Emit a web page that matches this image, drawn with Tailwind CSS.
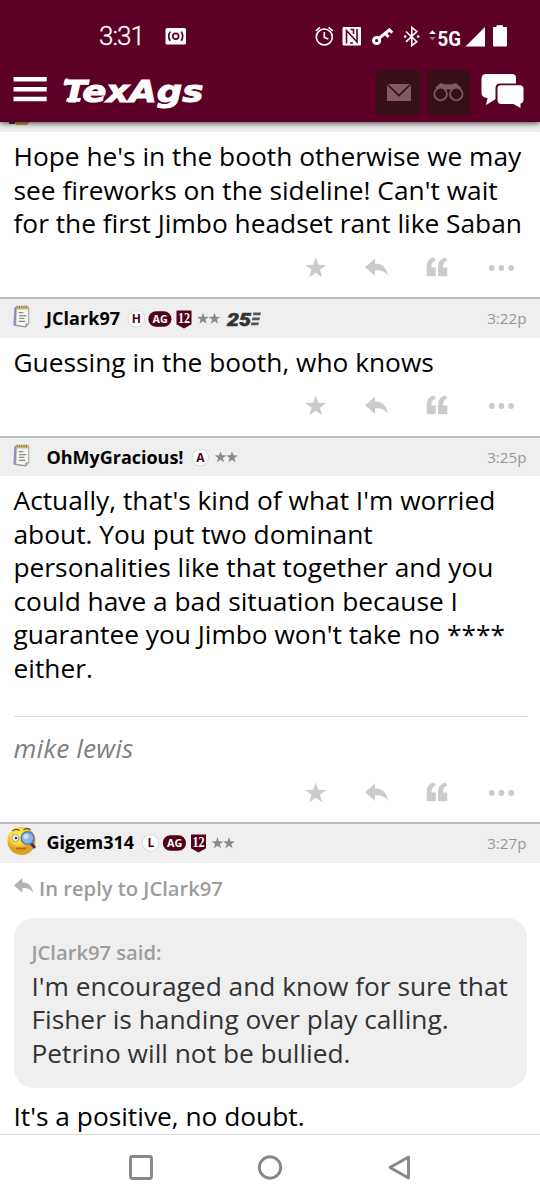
<!DOCTYPE html>
<html lang="en">
<head>
<meta charset="utf-8">
<title>TexAgs</title>
<script src="https://cdn.jsdelivr.net/npm/@tailwindcss/browser@4"></script>
</head>
<body class="w-[540px] h-[1200px] overflow-hidden bg-white font-['Open_Sans',sans-serif] text-black">
<svg class="hidden">
  <defs>
    <symbol id="star" viewBox="0 0 24 24"><path d="M12 .5l2.900 8.200 8.800.2-7 5.300 2.500 8.500L12 17.700l-7.200 5 2.500-8.500-7-5.300 8.800-.2z"/></symbol>
    <symbol id="reply" viewBox="0 0 24 20"><path d="M10.500 0v5.200C18 5.200 23 9.500 24 18.500c-3-4.500-7-6.200-13.500-6v6L0 9.300z"/></symbol>
    <symbol id="quote" viewBox="0 0 22 20"><path d="M0 19.500V11C0 4.500 3 1 7.500 0l2 3.500C6.500 4.500 5 6.500 5 10.500h4.500v9zM11.800 19.500V11c0-6.500 3-10 7.500-11l2 3.500c-3 1-4.500 3-4.500 7h4.500v9z"/></symbol>
    <symbol id="dots" viewBox="0 0 26 8"><circle cx="3.200" cy="4" r="2.900"/><circle cx="12.900" cy="4" r="2.900"/><circle cx="22.600" cy="4" r="2.900"/></symbol>
    <symbol id="note" viewBox="0 0 20 24">
      <path d="M2 2.500l2-1h13v18l-3 4-11-1.500-2-1z" fill="#8d91c4"/>
      <path d="M4 3.500l13-.5v16.500l-3.500 3L3.500 21z" fill="#f7f7f0" stroke="#8c8f98" stroke-width=".8"/>
      <path d="M13.500 22.500l.4-3.500 3.100.5z" fill="#9b9b91"/>
      <path d="M4 1.200h13v3.500H4z" fill="#d9b77c"/>
      <path d="M5 .5v3m2.400-3v3M9.800.5v3m2.400-3v3m2.400-3v3" stroke="#766044" stroke-width=".8"/>
      <path d="M6.500 8h5m-4.500 3h7.500m-7.500 3h5.500m-6 3h7" stroke="#81908d" stroke-width="1.300"/>
    </symbol>
    <symbol id="ag" viewBox="0 0 24 16"><rect x=".3" y=".3" width="23.200" height="15.400" rx="7.700" fill="#500018"/><text x="4.500" y="12" font-family="Open Sans" font-weight="700" font-size="11" fill="#fff" textLength="15.200" lengthAdjust="spacingAndGlyphs">AG</text></symbol>
    <symbol id="twelve" viewBox="0 0 16 19"><path d="M.5.500h15v13.800L8 18.500.5 14.300z" fill="#500018"/><text x="1.900" y="12.800" font-family="Liberation Serif" font-weight="700" font-size="14.500" fill="#fff" textLength="12.200" lengthAdjust="spacingAndGlyphs">12</text></symbol>
    <symbol id="actions" viewBox="0 0 210 24">
      <use href="#star" x="1" y="1" width="21.500" height="21.500"/>
      <use href="#reply" x="61" y="2.500" width="23" height="19"/>
      <use href="#quote" x="122.500" y="1.200" width="21.500" height="19.500"/>
      <use href="#dots" x="184.500" y="8" width="26" height="8"/>
    </symbol>
  </defs>
</svg>

<header class="relative z-10 flex h-[122px] flex-col bg-[#5c0025] text-white shadow-[0_1px_6px_rgba(0,0,0,0.75)]">
  <svg class="h-[66px] w-[540px]" viewBox="0 0 540 66" fill="#fff">
    <text x="99" y="45" font-family="Roboto" font-weight="300" font-size="26" textLength="46" stroke="#fff" stroke-width=".3">3:31</text>
    <rect x="165.500" y="28" width="20.500" height="16.500" rx="1.500"/>
    <g fill="none" stroke="#5c0025" stroke-width="1.700"><circle cx="175.700" cy="36.200" r="2.900"/><path d="M170.200 31.600q-3 4.600 0 9.200M181.200 31.600q3 4.600 0 9.200"/></g>
    <g fill="none" stroke="#fff" stroke-width="1.600"><circle cx="324.300" cy="37" r="8"/><path d="M324.300 32v5.500l4 1.500M315.800 30.800l4.200-3.500M328.600 27.300l4.200 3.500"/></g>
    <rect x="342.500" y="27" width="18.500" height="18.500" rx="1"/>
    <path d="M346.500 43.500V30.500L357 42V29M350.500 29.500h3v4.500M350 43h3" fill="none" stroke="#5c0025" stroke-width="1.600"/>
    <g fill="none" stroke="#fff" stroke-width="3"><circle cx="376.600" cy="40.500" r="3.100"/><path d="M379.300 38L390.500 29M385 33l3.500 4M389 29.500l3.200 3.200"/></g>
    <path d="M406 31.500l10.800 10.200-5 4V27.500l5 4L406 41.800" fill="none" stroke="#fff" stroke-width="1.600"/>
    <circle cx="405.200" cy="36.500" r="1.300"/><circle cx="418.200" cy="36.500" r="1.300"/>
    <path d="M429 34l3.500-3.800L436 34z"/><path d="M429.500 37l3 3.500 3-3.500z" opacity=".45"/>
    <text x="437.500" y="46" font-family="Roboto" font-weight="700" font-size="21" textLength="23.500" lengthAdjust="spacingAndGlyphs">5G</text>
    <path d="M485 27v19.500h-19.500z"/>
    <path d="M496.500 25.300h6.500V27h3.500q.5 0 .5 1v17.500q0 1-1 1h-12q-1 0-1-1V28q0-1 1-1h2.500z"/>
  </svg>
  <svg class="h-[56px] w-[540px]" viewBox="0 66 540 56" fill="#fff">
    <path d="M13.500 77h33.200v4.500H13.500zM13.500 87h33.200v4.500H13.500zM13.500 96.700h33.200v4.500H13.500z"/>
    <text x="62.500" y="101.500" font-family="DejaVu Sans" font-style="italic" font-weight="700" font-size="31" textLength="141" lengthAdjust="spacingAndGlyphs" stroke="#fff" stroke-width="1">TexAgs</text>
    <path d="M65.500 78.500h3l-2 7h-2.500zM67 98h14l-1 3.800H66z"/>
    <rect x="376.500" y="70" width="44" height="45" rx="3" fill="#380f17"/>
    <rect x="426.500" y="70" width="44" height="45" rx="3" fill="#380f17"/>
    <rect x="387" y="84" width="24" height="17" fill="#7f5b64"/>
    <path d="M387 84l12 11.500L411 84" fill="none" stroke="#380f17" stroke-width="1.700"/>
    <path d="M435 88l5-4.500q2.500-1 4 .8h8.500q1.500-1.800 4-.8l5 4.500-5.500 3-6.500-1.500h-2.200L441 91z" fill="#7f5b64"/>
    <g fill="#380f17" stroke="#7f5b64" stroke-width="1.700"><circle cx="440.600" cy="94" r="6.300"/><circle cx="456.300" cy="94" r="6.300"/></g>
    <path d="M486 74h26q4 0 4 4v19q0 2-2 2h-18l-10 6 1.500-7q-6-.5-6-5V79q0-5 4.500-5z"/>
    <path d="M500 84.500h20q4 0 4 4V99q0 4.500-3.500 4.500V108l-8-4H500q-3.500 0-3.500-4V88.500q0-4 3.500-4z" stroke="#5c0025" stroke-width="2"/>
    <path d="M501 85.500h19q3.500 0 3.500 3.500v10.500q0 3.500-3 4V108l-7-4h-12.500q-3 0-3-3.500V89q0-3.500 3-3.500z"/>
  </svg>
</header>

<main class="flex h-[1012px] flex-col overflow-hidden">
  <article class="flex h-[175px] flex-col">
    <div class="flex h-[10px] shrink-0 bg-[#efefef] pl-[9px]"><div class="h-[2px] w-[6px] bg-[#3b3340]"></div><div class="h-[3px] w-[14px] rounded-b-full bg-[#c39b45]"></div></div>
    <p class="mt-[8px] pl-[13.500px] text-[26.300px] leading-[33.600px] whitespace-nowrap">Hope he's in the booth otherwise we may<br>see fireworks on the sideline! Can't wait<br>for the first Jimbo headset rant like Saban</p>
    <svg class="mt-[15px] ml-[304px] h-6 w-[210px] shrink-0" fill="#cbcbcb"><use href="#actions"/></svg>
  </article>

  <article class="flex h-[139px] flex-col">
    <div class="flex h-[41px] shrink-0 items-center border-t-2 border-[#bdbdbd] bg-[#efefef]">
      <svg class="mb-1 ml-3 h-[23px] w-5"><use href="#note"/></svg>
      <svg class="h-[39px] w-[440px]" viewBox="32 299 440 39">
        <text x="46" y="325" font-family="Open Sans" font-weight="700" font-size="18" textLength="74">JClark97</text>
        <circle cx="136.300" cy="318.800" r="8.300" fill="#fff" stroke="#ccc" stroke-width=".7"/><text x="136.300" y="323" text-anchor="middle" font-family="Open Sans" font-weight="700" font-size="12" fill="#500018">H</text>
        <use href="#ag" x="148" y="311" width="24" height="16"/>
        <use href="#twelve" x="176" y="310" width="16" height="19"/>
        <g fill="#8b8b8b"><use href="#star" x="197" y="312.500" width="12" height="12"/><use href="#star" x="208.500" y="312.500" width="12" height="12"/></g>
        <text x="227" y="325.500" font-family="Roboto" font-weight="900" font-style="italic" font-size="18" fill="#333" stroke="#333" stroke-width=".5" textLength="24" lengthAdjust="spacingAndGlyphs">25</text>
        <path d="M253.500 312.500h7.500l-.7 2.800h-7.500zM252.500 317.500h7.500l-.7 2.800h-7.500zM251.500 322.500h7.500l-.7 2.800h-7.500z" fill="#555"/>
      </svg>
      <span class="ml-auto pr-[13.500px] text-[15.200px] text-[#999]">3:22p</span>
    </div>
    <p class="mt-2 pl-[13.500px] text-[26.300px] leading-[33.600px] whitespace-nowrap">Guessing in the booth, who knows</p>
    <svg class="mt-[14px] ml-[304px] h-6 w-[210px] shrink-0" fill="#cbcbcb"><use href="#actions"/></svg>
  </article>

  <article class="flex h-[386px] flex-col">
    <div class="flex h-[40px] shrink-0 items-center border-t-2 border-[#bdbdbd] bg-[#efefef]">
      <svg class="mb-1 ml-3 h-[23px] w-5"><use href="#note"/></svg>
      <svg class="h-[39px] w-[440px]" viewBox="32 438 440 39">
        <text x="46.500" y="463.500" font-family="Open Sans" font-weight="700" font-size="18" textLength="137">OhMyGracious!</text>
        <circle cx="200.300" cy="457.500" r="8.300" fill="#fff" stroke="#ccc" stroke-width=".7"/><text x="200.300" y="461.700" text-anchor="middle" font-family="Open Sans" font-weight="700" font-size="12" fill="#500018">A</text>
        <g fill="#8b8b8b"><use href="#star" x="214.500" y="451" width="12" height="12"/><use href="#star" x="226" y="451" width="12" height="12"/></g>
      </svg>
      <span class="ml-auto pr-[13.500px] text-[15.200px] text-[#999]">3:25p</span>
    </div>
    <p class="mt-2 pl-[13.500px] text-[26.300px] leading-[33.600px] whitespace-nowrap">Actually, that's kind of what I'm worried<br>about. You put two dominant<br>personalities like that together and you<br>could have a bad situation because I<br>guarantee you Jimbo won't take no ****<br>either.</p>
    <div class="mx-[13.500px] mt-[30px] border-t border-[#dcdcdc] pt-[15px] text-[26.300px] leading-[33.600px] tracking-[0.1px] text-[#808080] italic">mike lewis</div>
    <svg class="mt-[16px] ml-[304px] h-6 w-[210px] shrink-0" fill="#cbcbcb"><use href="#actions"/></svg>
  </article>

  <article class="flex flex-col">
    <div class="flex h-[41px] shrink-0 items-center border-t-2 border-[#bdbdbd] bg-[#efefef]">
      <svg class="h-[39px] w-[472px]" viewBox="0 824 472 39">
        <defs><radialGradient id="face" cx=".4" cy=".3"><stop offset="0" stop-color="#ffef61"/><stop offset=".65" stop-color="#f6d637"/><stop offset="1" stop-color="#dca029"/></radialGradient></defs>
        <circle cx="21.500" cy="841" r="14" fill="url(#face)"/>
        <path d="M12.500 831q3-3 7-.5M23.500 830q4-3 7 0" fill="none" stroke="#67501e" stroke-width="1.300"/>
        <circle cx="15.500" cy="838" r="3.500" fill="#fff" stroke="#8e8158" stroke-width=".8"/><circle cx="16" cy="838" r="1.300" fill="#333"/>
        <path d="M30 842l5 6" stroke="#343b4a" stroke-width="2.800"/>
        <circle cx="27.500" cy="838" r="6.300" fill="#8cb7ed" stroke="#5879ba" stroke-width="1.500"/><circle cx="26" cy="836.500" r="2.500" fill="#cce6ff"/>
        <path d="M16 848.500h10" stroke="#b86427" stroke-width="1.800"/>
        <text x="46.500" y="849" font-family="Open Sans" font-weight="700" font-size="18" textLength="87.500">Gigem314</text>
        <circle cx="150.500" cy="843" r="8.300" fill="#fff" stroke="#ccc" stroke-width=".7"/><text x="150.800" y="847.200" text-anchor="middle" font-family="Open Sans" font-weight="700" font-size="12" fill="#500018">L</text>
        <use href="#ag" x="162.500" y="835" width="24" height="16"/>
        <use href="#twelve" x="190.500" y="834" width="16" height="19"/>
        <g fill="#8b8b8b"><use href="#star" x="211.500" y="837" width="12" height="12"/><use href="#star" x="223" y="837" width="12" height="12"/></g>
      </svg>
      <span class="ml-auto pr-[13.500px] text-[15.200px] text-[#999]">3:27p</span>
    </div>
    <div class="mt-[9px] flex h-[32px] items-center gap-[6px] pl-[14px] text-[20.200px] font-semibold whitespace-nowrap text-[#9c9c9c]">
      <svg class="mb-1 h-4 w-[19px]" fill="#b3b3b3"><use href="#reply"/></svg>
      <span>In reply to JClark97</span>
    </div>
    <section class="mx-[13.500px] mt-[14px] h-[170px] rounded-[20px] bg-[#efefef] pt-[18px] pl-[18px] whitespace-nowrap">
      <div class="text-[20.200px] leading-[33.600px] font-semibold text-[#9c9c9c]">JClark97 said:</div>
      <p class="text-[26.300px] leading-[33.600px] text-[#333]">I'm encouraged and know for sure that<br>Fisher is handing over play calling.<br>Petrino will not be bullied.</p>
    </section>
    <p class="mt-3 pl-[13.500px] text-[26.300px] leading-[33.600px] whitespace-nowrap">It's a positive, no doubt.</p>
  </article>
</main>

<nav class="h-[66px] border-t border-[#d8d8d8] bg-white">
  <svg class="h-[65px] w-[540px]" viewBox="0 1135 540 65" fill="none" stroke="#888" stroke-width="2.900" stroke-linejoin="round">
    <rect x="130.500" y="1156.500" width="21" height="22" rx="2"/>
    <circle cx="270" cy="1167.500" r="10.700"/>
    <path d="M408.500 1157v21l-18.500-10.500z"/>
  </svg>
</nav>
</body>
</html>
